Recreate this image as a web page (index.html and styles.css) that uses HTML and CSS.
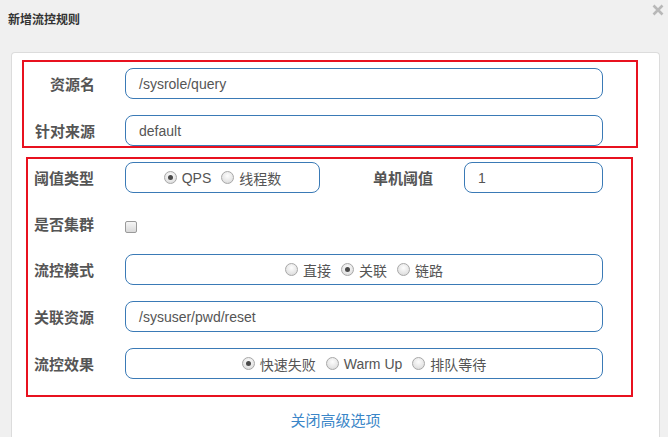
FILE: index.html
```html
<!DOCTYPE html>
<html lang="zh-CN">
<head>
<meta charset="utf-8">
<title>新增流控规则</title>
<link rel="stylesheet" href="styles.css">
</head>
<body>
<div class="modal">
  <div class="modal-header">
    <h4 class="modal-title">新增流控规则</h4>
    <span class="close" aria-label="关闭">
      <svg width="12" height="12" viewBox="0 0 12 12"><path d="M1.5 1.5 L10.5 10.5 M10.5 1.5 L1.5 10.5" stroke="#b8b8b8" stroke-width="2.6" stroke-linecap="butt"/></svg>
    </span>
  </div>
  <div class="panel">
    <div class="box box-basic">
      <label class="label label-right">资源名</label>
      <div class="input">/sysrole/query</div>
      <label class="label label-right">针对来源</label>
      <div class="input">default</div>
    </div>
    <div class="box box-adv">
      <label class="label">阈值类型</label>
      <div class="row-flex">
        <div class="input radios narrow">
          <span class="opt"><span class="radio checked"></span>QPS</span>
          <span class="opt"><span class="radio"></span>线程数</span>
        </div>
        <label class="label inline-label">单机阈值</label>
        <div class="input small">1</div>
      </div>
      <label class="label">是否集群</label>
      <div class="check-cell"><span class="checkbox"></span></div>
      <label class="label">流控模式</label>
      <div class="input radios">
        <span class="opt"><span class="radio"></span>直接</span>
        <span class="opt"><span class="radio checked"></span>关联</span>
        <span class="opt"><span class="radio"></span>链路</span>
      </div>
      <label class="label">关联资源</label>
      <div class="input">/sysuser/pwd/reset</div>
      <label class="label">流控效果</label>
      <div class="input radios">
        <span class="opt"><span class="radio checked"></span>快速失败</span>
        <span class="opt"><span class="radio"></span>Warm Up</span>
        <span class="opt"><span class="radio"></span>排队等待</span>
      </div>
    </div>
    <div class="toggle"><a class="toggle-link">关闭高级选项</a></div>
  </div>
</div>
</body>
</html>
```

FILE: styles.css
```css
html, body {
  margin: 0;
  padding: 0;
}
body {
  background: #f0f0f0;
  font-family: "Liberation Sans", "Noto Sans CJK SC", sans-serif;
  font-size: 15px;
  color: #555;
  width: 668px;
  height: 437px;
  overflow: hidden;
}
.modal {
  position: relative;
}
.modal-header {
  padding: 12px 0 0 8px;
  height: 40px;
}
.modal-title {
  margin: 0;
  font-size: 12px;
  line-height: 16px;
  font-weight: bold;
  color: #333;
}
.close {
  position: absolute;
  top: 4px;
  left: 652px;
  width: 12px;
  height: 12px;
  display: block;
}
.close svg {
  display: block;
}
.panel {
  margin-left: 11px;
  width: 647px;
  height: 390px;
  background: #fff;
  border: 1px solid #dcdcdc;
  border-bottom: none;
  border-radius: 4px 4px 0 0;
}
.box {
  border: 2px solid #e8111f;
  display: grid;
  box-sizing: border-box;
}
.box-basic {
  margin: 7px 0 0 10px;
  width: 616px;
  grid-template-columns: 71px 478px;
  column-gap: 30px;
  row-gap: 16px;
  padding: 6px 0 0 0;
}
.box-adv {
  margin: 9px 0 0 14px;
  width: 607px;
  grid-template-columns: 91px 478px;
  grid-template-rows: 31px 29px 31px 31px 31px;
  row-gap: 16px;
  padding: 3px 0 16px 6px;
}
.label {
  font-weight: bold;
  color: #555;
  display: flex;
  align-items: center;
  white-space: nowrap;
}
.label-right {
  justify-content: flex-end;
}
.input {
  box-sizing: border-box;
  height: 31px;
  border: 1px solid #3a7ab6;
  border-radius: 8px;
  padding-left: 13px;
  display: flex;
  align-items: center;
  color: #555;
  font-size: 14px;
}
.row-flex {
  display: flex;
  align-items: center;
}
.narrow {
  width: 195px;
}
.inline-label {
  width: 60px;
  margin-left: 53px;
  margin-right: 31px;
  height: 31px;
}
.small {
  width: 139px;
}
.radios {
  justify-content: center;
  padding-left: 0;
  gap: 10px;
}
.opt {
  display: inline-flex;
  align-items: center;
  gap: 5px;
  color: #555;
}
.radio {
  width: 11px;
  height: 11px;
  border-radius: 50%;
  border: 1px solid #a8a8a8;
  background: radial-gradient(circle at 50% 35%, #fdfdfd 0%, #e6e6e6 60%, #d2d2d2 100%);
  position: relative;
  flex: none;
}
.radio.checked::after {
  content: "";
  position: absolute;
  left: 3px;
  top: 3px;
  width: 5px;
  height: 5px;
  border-radius: 50%;
  background: #4a4a4a;
}
.check-cell {
  display: flex;
  align-items: center;
  padding-top: 7px;
}
.checkbox {
  width: 10px;
  height: 10px;
  border: 1px solid #9a9a9a;
  border-radius: 2px;
  background: linear-gradient(#f6f6f6, #d9d9d9);
}
.toggle {
  margin-top: 14px;
  text-align: center;
  line-height: 20px;
}
.toggle-link {
  color: #3a86c8;
  font-size: 15px;
  cursor: pointer;
}
```
